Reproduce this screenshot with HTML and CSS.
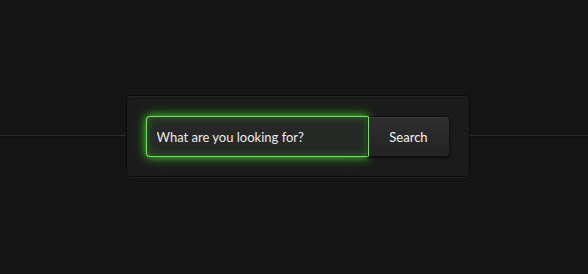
FILE: index.html
```html
<!DOCTYPE html>
<html lang="en">
<head>
  <meta charset="UTF-8" />
  <title>Search</title>
  <link rel="stylesheet" href="styles.css">
</head>
<body>
  <div class="stage">
    <form class="search-box" onsubmit="return false">
      <input type="text" class="search-input" placeholder="What are you looking for?" autofocus>
      <button class="search-btn">Search</button>
    </form>
  </div>
</body>
</html>
```
FILE: styles.css
```css
html, body { margin: 0; padding: 0; height: 100%; }
body { background: #151515 linear-gradient(to bottom, transparent 135px, #2a2a2a 135px, #2a2a2a 136px, #101010 136px, #101010 137px, transparent 137px); font-family: Lato, "Open Sans", sans-serif; }
.stage { height: 274px; display: flex; align-items: center; justify-content: center; padding-left: 7px; padding-bottom: 2px; box-sizing: border-box; }
.search-box { display: flex; padding: 20px 19px 19px 19px; background: #1b1b1b; border: 1px solid #0b0b0b; border-radius: 4px; box-shadow: inset 0 1px 0 #262626, 0 1px 0 #222; }
.search-input { width: 222px; height: 41px; box-sizing: border-box; padding: 0 10px; background: #262826; color: #f2f2f2; caret-color: #f2f2f2; border: 1px solid #6ce25a; border-right: none; border-radius: 4px 0 0 4px; font-family: inherit; font-size: 13px; outline: none; box-shadow: 0 0 8px rgba(80, 230, 50, 0.8), 0 0 16px rgba(60, 200, 40, 0.4), inset 0 0 10px rgba(70, 220, 45, 0.35); }
.search-input::placeholder { color: #ececec; }
.search-btn { width: 82px; height: 41px; border: 1px solid #121212; border-left: 1px solid #6ce25a; border-radius: 0 4px 4px 0; background: linear-gradient(#2f2f2f, #232323); color: #f6f6f6; font-family: inherit; font-size: 13px; cursor: pointer; box-shadow: inset 0 1px 0 #383838, 0 1px 2px #0a0a0a; }
```
